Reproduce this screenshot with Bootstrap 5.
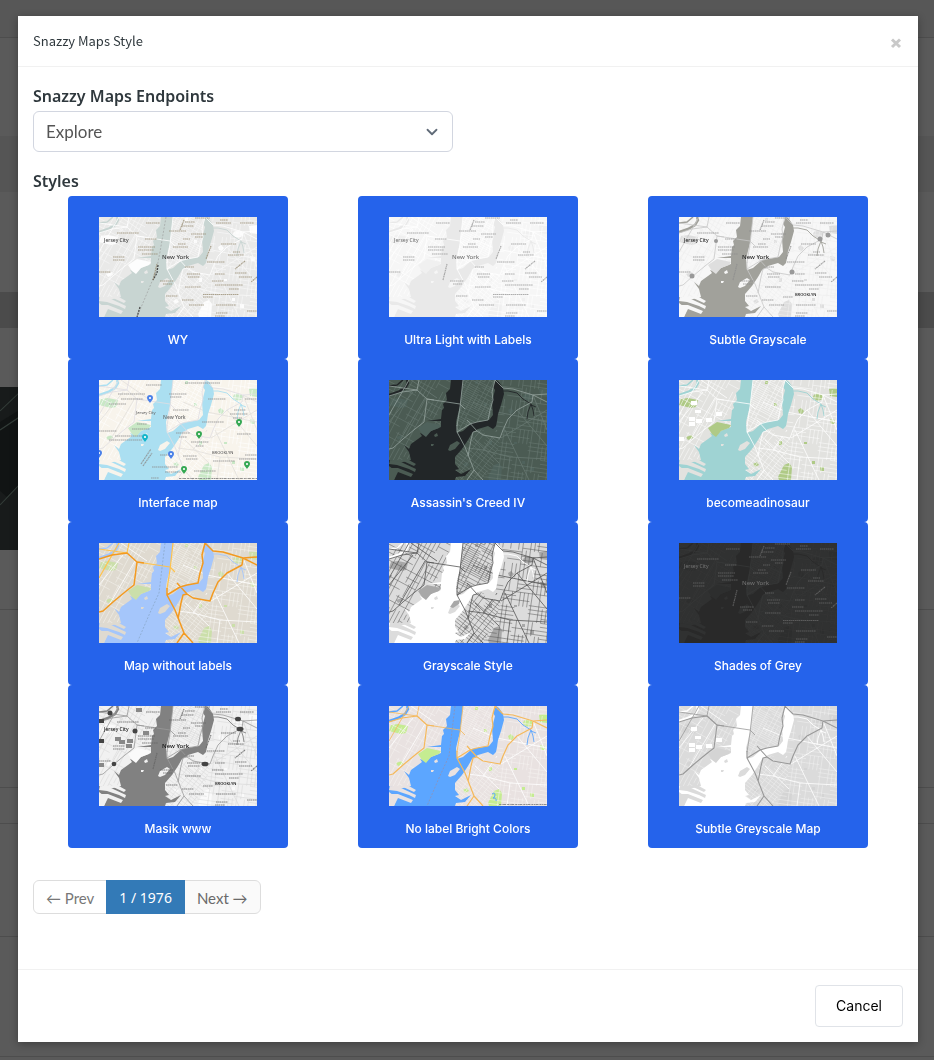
<!DOCTYPE html>
<html lang="en">
<head>
<meta charset="utf-8">
<meta name="viewport" content="width=device-width, initial-scale=1">
<title>Snazzy Maps Style</title>
<link rel="stylesheet" href="https://cdn.jsdelivr.net/npm/bootstrap@5.3.0/dist/css/bootstrap.min.css">
<style>
  body { background: #5a5a5a; font-family: Lato, "Noto Sans", sans-serif; color: #2f383d; }

  /* dimmed page behind the dialog */
  .page-behind { min-height: 100vh; overflow: hidden; }
  .page-behind > div { border-bottom: 1px solid #4d4d4d; }
  .strip-top { height: 38px; background: #575757; }
  .strip-nav { height: 98px; }
  .strip-tools { height: 56px; background: #555; }
  .strip-gap { height: 100px; }
  .strip-heading { height: 36px; background: #4b4b4b; }
  .strip-row { height: 59px; }
  .strip-map { height: 163px; }
  .strip-map svg { display: block; width: 50%; height: 100%; }
  .strip-a { height: 60px; }
  .strip-b { height: 178px; }
  .strip-c { height: 36px; }
  .strip-d { height: 113px; }
  .strip-e { height: 120px; }

  .styles-modal { padding-left: 2px; }
  .styles-modal .modal-dialog { max-width: 900px; margin-top: 16px; margin-bottom: 16px; }
  .styles-modal .modal-content { border: 0; border-radius: 0; box-shadow: 0 2px 8px rgba(0,0,0,.3); color: #2f383d; }
  .styles-modal .modal-header { padding: 15px; border-color: #f1f1f1; border-radius: 0; height: 51px; }
  .styles-modal .modal-title { font: 400 13px/20px "Noto Sans CJK JP", sans-serif; }
  .close-x { border: 0; background: none; padding: 0; width: 14px; height: 14px; line-height: 0; margin-top: 5px; }
  .styles-modal .modal-body { padding: 18px 15px 55px; }
  .field-row { --bs-gutter-x: 30px; }
  .field-title { font-family: "Noto Sans", sans-serif; font-weight: 600; font-size: 16px; line-height: 22px; display: block; margin: 0 0 4px; }
  .endpoint-select {
    height: 41px; border-color: #d2d6e0; border-radius: 6px; padding-left: 12px; color: #555; font-size: 17px;
    background-image: url("data:image/svg+xml,%3csvg xmlns='http://www.w3.org/2000/svg' viewBox='0 0 16 16'%3e%3cpath fill='none' stroke='%23606b78' stroke-width='2.4' stroke-linecap='round' stroke-linejoin='round' d='M2 5l6 6 6-6'/%3e%3c/svg%3e");
    background-size: 16px 12px;
  }
  .styles-title { margin-top: 18px; }
  .style-card {
    width: 220px; max-width: 100%; border: 0; border-radius: 4px; background: #2563eb; color: #fff;
    padding: 21px 10px 10px; font: 500 12px/18px Inter, sans-serif; display: block; margin: 0 auto;
  }
  .style-card svg { display: block; width: 158px; height: 100px; margin: 0 auto 14px; }
  .pager { margin-top: 32px; }
  .pager .page-link { height: 34px; padding: 6px 12px; font-size: 15px; line-height: 22px; color: #6a6a6a; border-color: #ddd; }
  .pager .disabled .page-link { background: #fff; color: #777; }
  .pager .page-item:last-child .page-link { background: #fafafa; }
  .pager .active .page-link { background: #337ab7; border-color: #337ab7; color: #fff; font-family: "Noto Sans", sans-serif; font-size: 14px; }
  .styles-modal .modal-footer { padding: 15px; border-color: #f1f1f1; }
  .styles-modal .modal-footer > * { margin: 0; }
  .cancel-btn { height: 42px; padding: 0 20px; border: 1px solid #e0e3e8; border-radius: 4px; font: 400 14px/20px Inter, sans-serif; color: #000; }

  /* map drawing: every theme sets these colours */
  .m-land { fill: var(--land); }
  .m-water { fill: var(--water); }
  .m-creek { fill: none; stroke: var(--water); }
  .m-park { fill: var(--park); }
  .m-street { fill: none; stroke: var(--street); stroke-width: var(--sw, .6); }
  .m-main { fill: none; stroke: var(--main, var(--street)); stroke-width: .8; }
  .m-hwy { fill: none; stroke: var(--hwy); stroke-width: var(--hw, .8); stroke-linejoin: round; }
  .m-bridge { fill: none; stroke: var(--bridge, var(--hwy)); stroke-width: var(--bw, .8); }
  .m-micro { fill: none; stroke: var(--label); stroke-width: 1.2; stroke-dasharray: 1.6 .5 .9 .4 2 .6; opacity: .8; }
  .m-name { fill: var(--city); font-family: "Noto Sans", sans-serif; font-weight: 500; }
  .t-wy { --land:#e9e9e8; --water:#c8d5d2; --park:#fdfdfd; --street:#f8f8f8; --hwy:#fff; --label:#998d74; --city:#3b3b3b; }
  .t-ultra { --land:#f6f6f6; --water:#e9e9e9; --park:#f0f0f0; --street:#fff; --hwy:#fff; --label:#999; --city:#777; }
  .t-subtle { --land:#f7f7f7; --water:#a1a19b; --park:#dedede; --street:#efefef; --hwy:#c8c8c8; --label:#8e8e8e; --city:#222; }
  .t-iface { --land:#f8f4ec; --water:#abdff1; --park:#c9e8c6; --street:#fff; --main:#e2dfdc; --hwy:#dfdde2; --label:#8c8c8c; --city:#666; }
  .t-creed { --land:#4b5b53; --water:#222628; --park:#4f625c; --street:#687972; --hwy:#96a39e; --sw:.6; }
  .t-dino { --land:#e2e2df; --water:#9fd3d3; --park:#afca86; --street:#fff; --hwy:#fff; --sw:.5; }
  .t-nolabel { --land:#dfdad0; --water:#a5c6fb; --park:#cbdfaa; --street:#f4f1ec; --main:#fff; --hwy:#f39a20; --hw:1.5; --bridge:#ffc34d; --bw:1.2; }
  .t-gray { --land:#dcdcdc; --water:#fff; --park:#a8a8a8; --street:#555; --main:#555; --hwy:#555; --sw:.5; }
  .t-shades { --land:#303131; --water:#292929; --park:#2d2e2e; --street:#353636; --hwy:#363737; --label:#666; --city:#6e6e6e; }
  .t-masik { --land:#f1f1f1; --water:#818181; --park:#fafafa; --street:#dadada; --hwy:#999; --label:#666; --city:#111; }
  .t-bright { --land:#e9e2e1; --water:#5ca6ff; --park:#c5ec91; --street:#f5f1f0; --main:#fff; --hwy:#f5b95b; --hw:1.2; --bridge:#f5b95b; }
  .t-grey { --land:#dbdbdb; --water:#fff; --park:#d4d4d4; --street:#eee; --main:#fff; --hwy:#999; --hw:1.1; }
</style>
</head>
<body>

<!-- shared map geometry -->
<svg width="0" height="0" class="position-absolute" aria-hidden="true">
  <defs>
    <clipPath id="c-nj"><path d="M0 0H62L55 25L51 47L22 80L0 80Z"/></clipPath>
    <clipPath id="c-man"><path d="M74 0H105L101 38L84 43L68 53L67 43Z"/></clipPath>
    <clipPath id="c-bk"><path d="M65 77L89 48L112 58L104 85L94 100H62Z"/></clipPath>
    <clipPath id="c-east"><path d="M108 0H158V100H94L104 85L112 58L106 48Z"/></clipPath>
  </defs>
  <symbol id="m-base" viewBox="0 0 158 100">
    <rect class="m-land" width="158" height="100"/>
    <g class="m-park">
      <path d="M2 19L9 18L19 20L17 27L12 28L0 25Z"/><ellipse cx="139" cy="17" rx="5" ry="3.6"/><path d="M150 9L158 8V17L151 16Z"/>
      <path d="M119 30l3-2 3 3-2 3-3-1ZM100 61h3v4h-3ZM74 84l4-2 2 3-4 2ZM151 39l5 1v4h-4ZM133 81h3v3h-3ZM141 87h4v4h-4ZM68 20h4v4h-4ZM95 23h3v3h-3ZM125 62h3v2h-3ZM7 57l6-2 1 3-5 2ZM86 1h3v3h-3Z"/>
      <path d="M99 97L105 85L110 83L113 87L112 100H100Z"/>
    </g>
    <g class="m-street">
      <path id="s-nj" clip-path="url(#c-nj)"/><path id="s-man" clip-path="url(#c-man)"/>
      <path id="s-bk" clip-path="url(#c-bk)"/><path id="s-east" clip-path="url(#c-east)"/>
    </g>
    <path class="m-main" d="M79 68L94 70L121 77L158 79M0 42L24 12M10 62L36 18M22 0L48 18M112 58L158 30M116 50L140 100M128 30L158 66M86 60L110 83M84 22L108 32L158 42M94 70L108 50M121 77L118 100M144 15L158 50"/>
    <path class="m-creek" stroke-width="2.4" d="M0 15L9 12L16 8L19 3L18 0"/>
    <path class="m-creek" stroke-width="1.5" d="M0 6L8 5L14 0"/>
    <path class="m-creek" stroke-width=".9" d="M113 11L119 11L128 13L134 19L142 24L144 30L145 36M142 24L139 32L138 39M142 25L147 27"/>
    <path class="m-water" d="M62 0H74L71 26L67 42L68 53L74 51L83 43L100 40L104 35L103 22L106 10L104 7L107 0L110 2L114 8L115 14L112 25L109 34L108 41L107 46L104 49L99 46L89 49L83 53L79 60L73 69L66 77L66 84L70 89L66 90L72 94L82 89L76 96L67 97L66 100H5L8 92L0 86V80L10 83L22 80L20 72L15 65L20 69L22 64L29 59L33 56L31 53L37 55L42 51L52 47L52 41L38 41L52 39L53 30L55 28L54 24L58 20L57 13L61 9Z"/>
    <path class="m-land" d="M59 70L61 65L68 61L71 63L66 69L61 71ZM45 55l3-2 1 3-3 1ZM42 64l3 0-1 2-2 0ZM1 80L12 82L27 89L26 92L20 89L8 85L0 84ZM11 75L27 84L25 86L14 81ZM0 88L9 88L24 94L22 97L9 92L5 100H0ZM93 51L105 50L111 57L100 56Z"/>
    <path class="m-park" d="M29 48L38 42L52 45L50 48L42 51L37 57L33 54Z"/>
  </symbol>
  <symbol id="m-roads" viewBox="0 0 158 100">
    <path class="m-bridge" d="M38 19L71 24L76 29M74 0L71 27L68 46M0 6L28 10M28 10L30 0M0 35L20 0"/>
    <path class="m-hwy" d="M0 16L13 12L28 10L38 19L35 42L26 49L14 59L4 68L0 69M38 19L45 20M68 45L68 52L76 67L85 90L78 100M85 90L94 100M68 52L81 44L88 42L99 40L101 30L104 20L103 12L106 0L114 8L124 9L144 15L158 14M144 15L158 22M78 40L88 51L94 55L111 58L114 50L119 39L128 30L143 22L144 15M88 51L84 52L82 60L79 76"/>
  </symbol>
  <symbol id="m-labels" viewBox="0 0 158 100">
    <path class="m-micro" d="M47 6h14M18 16h22M46 22h12M39 30h17M39 33h16M43 37h16M14 40h12M14 43h12M0 55h12M86 5h10M83 9h12M96 1h15M70 14h17M84 22h7M92 17h15M96 20h8M79 27h8M74 30h15M121 3h8M117 6h15M141 6h14M122 27h15M134 35h7M129 38h16M108 45h18M86 50h9M88 57h13M89 60h12M61 64h14M64 67h9M116 57h10M136 56h12M140 60h13M113 64h12M86 70h16M116 68h28M130 72h10M67 79h12M104 80h10M83 83h12M90 88h15M117 88h20M117 96h12M116 99h10M148 94h10"/>
    <path class="m-micro" d="M85 3l-4 10M112 29l-5 13M58 47l-4 16M146 44l-10 8M158 60l-6 5"/>
  </symbol>
  <symbol id="m-pin" viewBox="0 0 6 8"><path d="M3 8C2 6 0 5 0 3a3 3 0 0 1 6 0C6 5 4 6 3 8Z"/><circle cx="3" cy="3" r="1.1" fill="#fff"/></symbol>
</svg>

<div class="page-behind" aria-hidden="true">
  <div class="strip-top"></div>
  <div class="strip-nav border-bottom-0"></div>
  <div class="strip-tools border-bottom-0"></div>
  <div class="strip-gap border-bottom-0"></div>
  <div class="strip-heading border-bottom-0"></div>
  <div class="strip-row border-bottom-0"></div>
  <div class="strip-map border-bottom-0">
    <svg viewBox="0 0 400 163" preserveAspectRatio="none"><path fill="#181b1b" d="M0 0H400V163H0Z"/><path fill="#111414" d="M0 35L18 22V95L6 110L0 104Z"/><path fill="none" stroke="#333c38" d="M0 24L18 4M0 43L18 29M0 118L18 96"/></svg>
  </div>
  <div class="strip-a"></div>
  <div class="strip-b"></div>
  <div class="strip-c"></div>
  <div class="strip-d"></div>
  <div class="strip-e"></div>
</div>

<div class="modal styles-modal d-block" role="dialog" aria-modal="true" aria-labelledby="dlg-title">
  <div class="modal-dialog">
    <div class="modal-content">
      <div class="modal-header align-items-start">
        <h5 class="modal-title" id="dlg-title">Snazzy Maps Style</h5>
        <button type="button" class="close-x" aria-label="Close">
          <svg width="14" height="14" viewBox="0 0 14 14"><path d="M3 3.500L11 11M11 3.500L3 11" stroke="#c9c9c9" stroke-width="3"/></svg>
        </button>
      </div>

      <div class="modal-body">
        <div class="row field-row">
          <div class="col-6">
            <label class="field-title" for="endpoint">Snazzy Maps Endpoints</label>
            <select class="form-select endpoint-select" id="endpoint">
              <option selected>Explore</option>
              <option>Favorites</option>
              <option>My Styles</option>
            </select>
          </div>
        </div>

        <h6 class="field-title styles-title">Styles</h6>
        <div class="row g-0">
          <div class="col-4">
            <button type="button" class="style-card"><svg class="t-wy" viewBox="0 0 158 100"><use href="#m-base"/><use href="#m-roads"/>
              <path d="M67 0L61 35L57 55L38 100" fill="none" stroke="#999" stroke-width=".6" stroke-dasharray="2 1.500"/><path d="M59 48L58 56L54 63M41 90L38 100" fill="none" stroke="#444" stroke-width="1.200" stroke-dasharray="2 1"/>
              <use href="#m-labels"/><path class="m-micro" d="M104 77.500h36"/>
              <text class="m-name" x="5" y="25" font-size="5">Jersey City</text><text class="m-name" x="63" y="42" font-size="6">New York</text></svg>WY</button>
          </div>
          <div class="col-4">
            <button type="button" class="style-card"><svg class="t-ultra" viewBox="0 0 158 100"><use href="#m-base"/><use href="#m-roads"/><use href="#m-labels"/><path class="m-micro" d="M104 77.500h36"/>
              <text class="m-name" x="5" y="25" font-size="5">Jersey City</text><text class="m-name" x="63" y="42" font-size="6">New York</text></svg>Ultra Light with Labels</button>
          </div>
          <div class="col-4">
            <button type="button" class="style-card"><svg class="t-subtle" viewBox="0 0 158 100"><use href="#m-base"/><use href="#m-roads"/><use href="#m-labels"/>
              <g fill="#999"><circle cx="37" cy="24" r="2"/><circle cx="13" cy="59" r="2.500"/><circle cx="113" cy="55" r="2.500"/><circle cx="141" cy="22" r="2.500"/><circle cx="149" cy="18" r="2.500"/></g>
              <text class="m-name" x="5" y="25" font-size="5">Jersey City</text><text class="m-name" x="63" y="42" font-size="6">New York</text><text class="m-name" x="116" y="79" font-size="4">BROOKLYN</text></svg>Subtle Grayscale</button>
          </div>
          <div class="col-4">
            <button type="button" class="style-card"><svg class="t-iface" viewBox="0 0 158 100"><use href="#m-base"/><use href="#m-roads"/>
              <path class="m-micro" d="M19 14h27M22 19h22M10 24h17M47 5h16M86 3h35M70 14h18M71 17h12M74 30h16M0 51h18M38 44h10M33 49h18M16 56h27M10 60h33M109 19h18M135 30h12M131 34h18M134 38h9M103 42h22M77 53h14M80 57h8M92 62h18M97 66h8M61 75h10M84 76h14M87 79h12M114 81h22M53 87h26M66 92h16M95 91h22M138 54h14M146 75h12M140 79h17M52 98h8M146 19h12M42 84L52 69M44 86L53 73"/>
              <text class="m-name" x="37" y="34" font-size="4">Jersey City</text><text class="m-name" x="64" y="39" font-size="5">New York</text><text class="m-name" x="113" y="74" font-size="4">BROOKLYN</text>
              <path d="M80 98.500H158" stroke="#777" stroke-width=".8" stroke-dasharray="2 .6 1 .5 3 1"/>
              <g fill="#34a853"><use href="#m-pin" x="97" y="51" width="6" height="8"/><use href="#m-pin" x="137" y="39" width="6" height="8"/><use href="#m-pin" x="145" y="81" width="6" height="8"/><use href="#m-pin" x="82" y="86" width="6" height="8"/></g>
              <g fill="#4a80e8"><use href="#m-pin" x="48" y="15" width="6" height="8"/><use href="#m-pin" x="69" y="71" width="6" height="8"/><use href="#m-pin" x="-3" y="70" width="6" height="8"/><use href="#m-pin" x="43" y="54" width="6" height="8" fill="#12b5cb"/></g></svg>Interface map</button>
          </div>
          <div class="col-4">
            <button type="button" class="style-card"><svg class="t-creed" viewBox="0 0 158 100"><use href="#m-base"/><use href="#m-roads"/></svg>Assassin's Creed IV</button>
          </div>
          <div class="col-4">
            <button type="button" class="style-card"><svg class="t-dino" viewBox="0 0 158 100"><use href="#m-base"/><use href="#m-roads"/>
              <path fill="#fff" d="M12 21h6v4h-6ZM16 30h6v3h-6ZM10 37h6v4h-6ZM17 39h6v4h-6ZM27 38h6v4h-6ZM10 42h6v4h-6ZM37 32h6v4h-6ZM0 57h5v4h-5Z"/></svg>becomeadinosaur</button>
          </div>
          <div class="col-4">
            <button type="button" class="style-card"><svg class="t-nolabel" viewBox="0 0 158 100"><use href="#m-base"/><use href="#m-roads"/>
              <path d="M66 0L60 50L50 72L38 100" fill="none" stroke="#87a5c4" stroke-width=".7" stroke-dasharray="2 1.500"/></svg>Map without labels</button>
          </div>
          <div class="col-4">
            <button type="button" class="style-card"><svg class="t-gray" viewBox="0 0 158 100"><use href="#m-base"/><use href="#m-roads"/><path d="M61 64L65 58L71 57L70 61L64 65Z" fill="#a8a8a8"/></svg>Grayscale Style</button>
          </div>
          <div class="col-4">
            <button type="button" class="style-card"><svg class="t-shades" viewBox="0 0 158 100"><use href="#m-base"/><use href="#m-roads"/><use href="#m-labels"/><path class="m-micro" d="M104 77.500h36"/>
              <text class="m-name" x="5" y="25" font-size="5">Jersey City</text><text class="m-name" x="63" y="42" font-size="6">New York</text></svg>Shades of Grey</button>
          </div>
          <div class="col-4">
            <button type="button" class="style-card"><svg class="t-masik" viewBox="0 0 158 100"><use href="#m-base"/><use href="#m-roads"/><use href="#m-labels"/>
              <g fill="#444"><circle cx="11" cy="7" r="2.500"/><circle cx="36" cy="25" r="2.500"/><circle cx="15" cy="58" r="2.300"/><ellipse cx="106" cy="58" rx="3.500" ry="2.300"/><ellipse cx="139" cy="13" rx="3" ry="2.300"/><ellipse cx="141" cy="23" rx="3.500" ry="2.300"/><path d="M0 13h5v4h-5ZM0 33h5v4h-5Z"/></g>
              <path fill="#888" d="M37 2h6v4h-6ZM16 31h6v4h-6ZM20 34h6v4h-6ZM28 33h6v4h-6ZM27 38h6v4h-6ZM44 25h6v4h-6ZM0 57h5v4h-5Z"/>
              <text class="m-name" x="5" y="25" font-size="5">Jersey City</text><text class="m-name" x="63" y="42" font-size="6">New York</text><text class="m-name" x="116" y="79" font-size="4">BROOKLYN</text></svg>Masik www</button>
          </div>
          <div class="col-4">
            <button type="button" class="style-card"><svg class="t-bright" viewBox="0 0 158 100"><use href="#m-base"/><use href="#m-roads"/>
              <path d="M66 0L60 50L50 72L38 100" fill="none" stroke="#a08a9a" stroke-width=".6" stroke-dasharray="2 1.500"/><path d="M103 88q3-2 3 1t-2 3q4 0 3 3" fill="none" stroke="#5ca6ff"/><path d="M110 98.500H158" stroke="#777" stroke-width=".8" stroke-dasharray="2 .6 1 .5 3 1"/></svg>No label Bright Colors</button>
          </div>
          <div class="col-4">
            <button type="button" class="style-card"><svg class="t-grey" viewBox="0 0 158 100"><use href="#m-base"/><use href="#m-roads"/>
              <path fill="#fff" d="M12 21h6v4h-6ZM16 30h6v3h-6ZM10 37h6v4h-6ZM17 39h6v4h-6ZM27 38h6v4h-6ZM10 42h6v4h-6ZM37 32h6v4h-6Z"/></svg>Subtle Greyscale Map</button>
          </div>
        </div>

        <nav class="pager" aria-label="Style pages">
          <ul class="pagination mb-0">
            <li class="page-item disabled"><a class="page-link" href="#">← Prev</a></li>
            <li class="page-item active"><a class="page-link" href="#">1 / 1976</a></li>
            <li class="page-item"><a class="page-link" href="#">Next →</a></li>
          </ul>
        </nav>
      </div>

      <div class="modal-footer">
        <button type="button" class="btn cancel-btn">Cancel</button>
      </div>
    </div>
  </div>
</div>

<script src="https://cdn.jsdelivr.net/npm/bootstrap@5.3.0/dist/js/bootstrap.bundle.min.js"></script>
<script>
  // Street grids: two sets of parallel lines per borough, broken into blocks.
  let seed = 7;
  const rnd = () => (seed = (seed * 16807) % 2147483647) / 2147483647;
  function grid(id, angle, gapA, gapB, keep) {
    let d = '';
    [[angle, gapA], [angle + 90, gapB]].forEach(([deg, gap]) => {
      const a = deg * Math.PI / 180, c = Math.cos(a), s = Math.sin(a);
      for (let o = -120; o < 120; o += gap) {
        for (let t = -120; t < 120; t += 14) {
          if (rnd() > keep) continue;
          const p = k => (79 + k * c - o * s).toFixed(1) + ' ' + (50 + k * s + o * c).toFixed(1);
          d += 'M' + p(t) + 'L' + p(t + 14);
        }
      }
    });
    document.getElementById(id).setAttribute('d', d);
  }
  grid('s-nj', 118, 4, 7, .55);
  grid('s-man', 28, 2, 4, .75);
  grid('s-bk', 38, 3, 5, .8);
  grid('s-east', 8, 4, 4, .55);
</script>
</body>
</html>
